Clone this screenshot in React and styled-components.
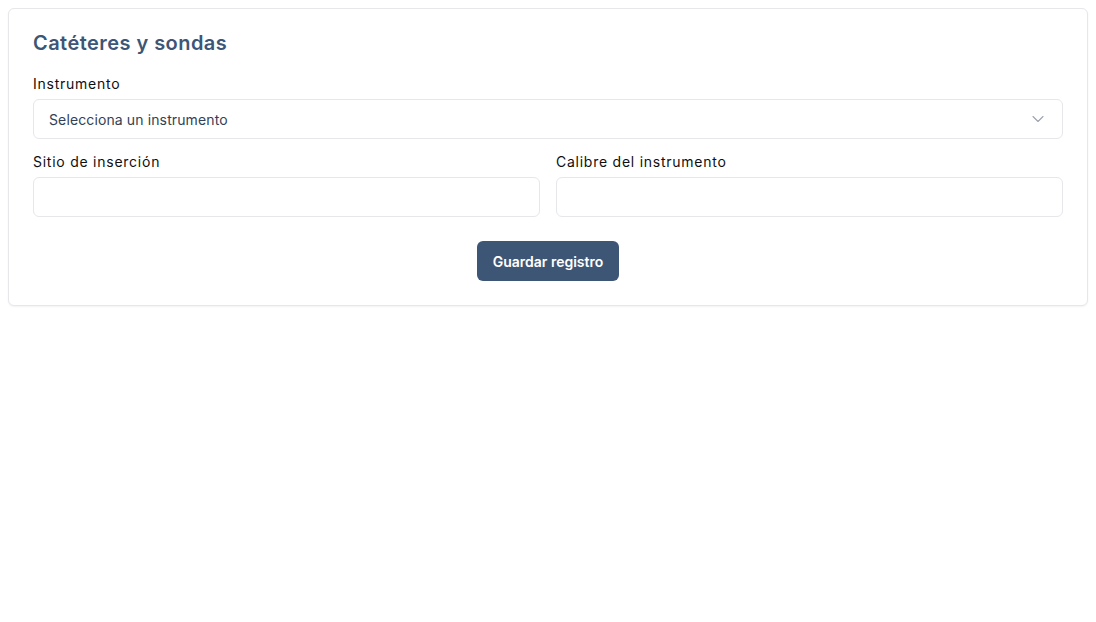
import React from 'react';
import styled, { createGlobalStyle } from 'styled-components';
import { ChevronDown } from 'lucide-react';

const GlobalStyle = createGlobalStyle`
  * {
    box-sizing: border-box;
  }

  body {
    margin: 0;
    background: #ffffff;
    font-family: Inter, "Noto Sans", sans-serif;
    color: #111827;
  }
`;

const Page = styled.div`
  padding: 8px;
`;

const Card = styled.section`
  border: 1px solid #e5e7eb;
  border-radius: 6px;
  background: #ffffff;
  box-shadow: 0 1px 2px rgba(0, 0, 0, 0.05);
  padding: 20px 24px 24px;
`;

const Title = styled.h2`
  margin: 0 0 17px;
  font-size: 20px;
  line-height: 28px;
  font-weight: 600;
  letter-spacing: 0.45px;
  color: #3d5675;
`;

const Field = styled.div`
  display: flex;
  flex-direction: column;
  gap: 5px;
  min-width: 0;
`;

const Label = styled.label`
  font-size: 14px;
  line-height: 20px;
  font-weight: 400;
  letter-spacing: 0.75px;
  color: #0f0f0f;
`;

const SelectBox = styled.div`
  display: flex;
  align-items: center;
  justify-content: space-between;
  height: 40px;
  padding: 0 14px 0 15px;
  border: 1px solid #e5e7eb;
  border-radius: 6px;
  font-size: 14px;
  letter-spacing: 0.12px;
  color: #334155;
`;

const Input = styled.input`
  height: 40px;
  width: 100%;
  padding: 0 15px;
  border: 1px solid #e5e7eb;
  border-radius: 6px;
  font-family: inherit;
  font-size: 14px;
  outline: none;
`;

const Row = styled.div`
  display: grid;
  grid-template-columns: 1fr 1fr;
  gap: 16px;
  margin-top: 13px;
`;

const Actions = styled.div`
  display: flex;
  justify-content: center;
  margin-top: 24px;
`;

const Button = styled.button`
  height: 40px;
  padding: 0 16px;
  border: none;
  border-radius: 6px;
  background: #3d5675;
  color: #ffffff;
  font-family: inherit;
  font-size: 14px;
  font-weight: 600;
  cursor: pointer;
`;

const App = () => (
  <Page>
    <GlobalStyle />
    <Card>
      <Title>Catéteres y sondas</Title>
      <Field>
        <Label>Instrumento</Label>
        <SelectBox>
          <span>Selecciona un instrumento</span>
          <ChevronDown size={20} strokeWidth={1.3} color="#9ca3af" />
        </SelectBox>
      </Field>
      <Row>
        <Field>
          <Label>Sitio de inserción</Label>
          <Input />
        </Field>
        <Field>
          <Label>Calibre del instrumento</Label>
          <Input />
        </Field>
      </Row>
      <Actions>
        <Button>Guardar registro</Button>
      </Actions>
    </Card>
  </Page>
);

export default App;
